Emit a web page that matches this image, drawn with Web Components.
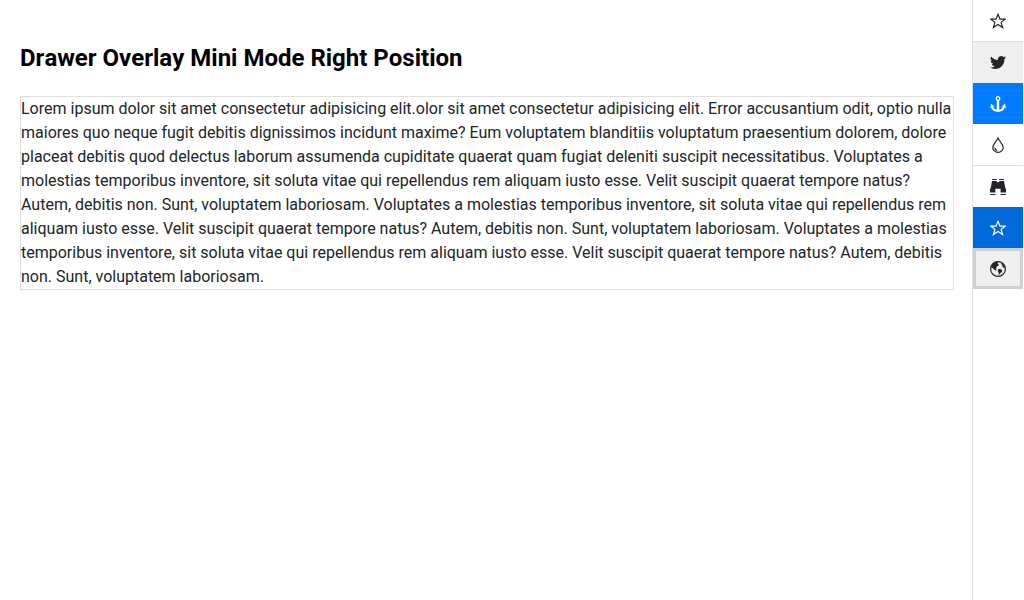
<!DOCTYPE html>
<html lang="en">
<head>
<meta charset="utf-8">
<title>Drawer Overlay Mini Mode Right Position</title>
<style>
body { margin: 0; background: #fff; color: #212529; font: 16px/24px Roboto, sans-serif; }
</style>
</head>
<body>
<drawer-layout>
  <h2 slot="title">Drawer Overlay Mini Mode Right Position</h2>
  <content-box>Lorem ipsum dolor sit amet consectetur adipisicing elit.olor sit amet consectetur adipisicing elit. Error accusantium odit, optio nulla maiores quo neque fugit debitis dignissimos incidunt maxime? Eum voluptatem blanditiis voluptatum praesentium dolorem, dolore placeat debitis quod delectus laborum assumenda cupiditate quaerat quam fugiat deleniti suscipit necessitatibus. Voluptates a molestias temporibus inventore, sit soluta vitae qui repellendus rem aliquam iusto esse. Velit suscipit quaerat tempore natus? Autem, debitis non. Sunt, voluptatem laboriosam. Voluptates a molestias temporibus inventore, sit soluta vitae qui repellendus rem aliquam iusto esse. Velit suscipit quaerat tempore natus? Autem, debitis non. Sunt, voluptatem laboriosam. Voluptates a molestias temporibus inventore, sit soluta vitae qui repellendus rem aliquam iusto esse. Velit suscipit quaerat tempore natus? Autem, debitis non. Sunt, voluptatem laboriosam.</content-box>
  <mini-drawer slot="drawer">
    <drawer-item icon="star" label="Favourites" divided></drawer-item>
    <drawer-item icon="bird" label="Twitter" state="hover"></drawer-item>
    <drawer-item icon="anchor" label="Anchor" state="selected"></drawer-item>
    <drawer-item icon="drop" label="Droplet" divided></drawer-item>
    <drawer-item icon="binoculars" label="Search"></drawer-item>
    <drawer-item icon="star" label="Starred" state="selected-hover"></drawer-item>
    <drawer-item icon="earth" label="World" state="focus"></drawer-item>
  </mini-drawer>
</drawer-layout>
<script>
class BaseElement extends HTMLElement {
  render(html) { this.attachShadow({ mode: 'open' }).innerHTML = html; }
}

customElements.define('drawer-layout', class extends BaseElement {
  connectedCallback() {
    this.render(`<style>
      :host { display: flex; min-height: 100vh; }
      main { flex: 1; min-width: 0; padding: 0 18px 0 20px; }
      ::slotted(h2) { margin: 44px 0 24px; color: #000; font-size: 24px; line-height: 28px; font-weight: 700; font-kerning: none; }
    </style><main><slot name="title"></slot><slot></slot></main><slot name="drawer"></slot>`);
  }
});

customElements.define('content-box', class extends BaseElement {
  connectedCallback() {
    this.render(`<style>:host { display: block; border: 1px solid #e0e0e0; }</style><slot></slot>`);
  }
});

customElements.define('mini-drawer', class extends BaseElement {
  connectedCallback() {
    this.render(`<style>
      :host { display: block; flex: none; width: 50px; border-left: 1px solid #dee2e6; border-right: 1px solid #fff; }
      nav { display: flex; flex-direction: column; }
    </style><nav aria-label="Drawer"><slot></slot></nav>`);
  }
});

const icons = {
  star: '<path fill="none" stroke="currentColor" stroke-width="1.2" d="M8 1.3l2 4.9h5.1l-4 3.2 1.5 5.1L8 11.5l-4.6 3 1.5-5.1-4-3.2H6z"/>',
  bird: '<path transform="translate(0 -1)" d="M16 3.54a6.6 6.6 0 0 1-1.89.52 3.3 3.3 0 0 0 1.45-1.82 6.6 6.6 0 0 1-2.09.8 3.28 3.28 0 0 0-5.59 2.99A9.32 9.32 0 0 1 1.11 2.6a3.28 3.28 0 0 0 1.02 4.38 3.27 3.27 0 0 1-1.49-.41v.04a3.28 3.28 0 0 0 2.63 3.22 3.3 3.3 0 0 1-1.48.06 3.28 3.28 0 0 0 3.07 2.28A6.6 6.6 0 0 1 0 13.53a9.29 9.29 0 0 0 5.03 1.47c6.04 0 9.34-5 9.34-9.34l-.01-.42A6.7 6.7 0 0 0 16 3.54z"/>',
  anchor: '<path fill-rule="evenodd" d="M8 0a2.6 2.6 0 0 1 1.2 4.8v8.6c1.9-.25 3.2-1 3.9-2.2l-1.9.2 3.6-3.8 1.2 4.7-1.1-.7C14.2 14.2 11.5 16 8 16s-6.2-1.8-6.9-4.4l-1.1.7 1.2-4.7 3.6 3.8-1.9-.2c.7 1.2 2 1.95 3.9 2.2V4.8A2.6 2.6 0 0 1 8 0zm0 1.4a1.15 1.15 0 1 0 0 2.3 1.15 1.15 0 0 0 0-2.3z"/>',
  drop: '<g fill="none" stroke="currentColor"><path stroke-width="1.2" d="M8 .9C7 4 2.8 7 2.8 10.4a5.2 5 0 0 0 10.4 0C13.2 7 9 4 8 .9z"/><path stroke-width="1.1" d="M4.7 10.6c.2 1.5 1.1 2.5 2.5 2.9"/></g>',
  binoculars: '<path d="M2.2 0h4.6v1H2.2zM9.2 0h4.6v1H9.2zM2 2h4.8v1.2h2.4V2H14l1.2 6.5.8 2V13.4h-5.4V9.8H5.4v3.6H0v-2.9l.8-2zM.2 15h5.2v1H.2zM10.6 15h5.2v1h-5.2z"/>',
  earth: '<circle cx="8" cy="8" r="7.4" fill="none" stroke="currentColor" stroke-width="1.2"/><path d="M1.2 5.4C2 3 4.4 1 7.2.8l1.3.6-1.1.8.9 1 .8 1-1.5.8-1.4 1.2.6 1.2-1.1.4.8 1-.4 1-1.7-1L2.6 7 1.4 6.6zM8.2 7.9l2.1.2 1.9 1.2-.3 1.7-1.5 1-1.2 1.8-.6-.2.1-2-.9-1.4zM11.1 2l2.1 1.3 1.5 2.8-.2 1.2-1.2-.7-1-1.2.2-1.2-1.1-.9z"/>'
};

customElements.define('drawer-item', class extends BaseElement {
  connectedCallback() {
    this.render(`<style>
      :host { display: block; }
      :host([divided]) { border-bottom: 1px solid #dee2e6; }
      button { display: flex; align-items: center; justify-content: center; box-sizing: border-box; width: 100%; height: 41px; margin: 0; padding: 1px 0 0; border: 0; border-radius: 0; background: #fff; color: #212529; font: inherit; }
      :host([state="hover"]) button, :host([state="focus"]) button { background: #efefef; }
      :host([state="selected"]) button { background: #007bff; color: #fff; }
      :host([state="selected-hover"]) button { background: #0069d9; color: #fff; }
      :host([state="focus"]) button { box-shadow: inset 0 0 0 3px #d0d0d0; }
      svg { width: 16px; height: 16px; }
    </style><button type="button" aria-label="${this.getAttribute('label')}"><svg viewBox="0 0 16 16" fill="currentColor" aria-hidden="true">${icons[this.getAttribute('icon')]}</svg></button>`);
  }
});
</script>
</body>
</html>
